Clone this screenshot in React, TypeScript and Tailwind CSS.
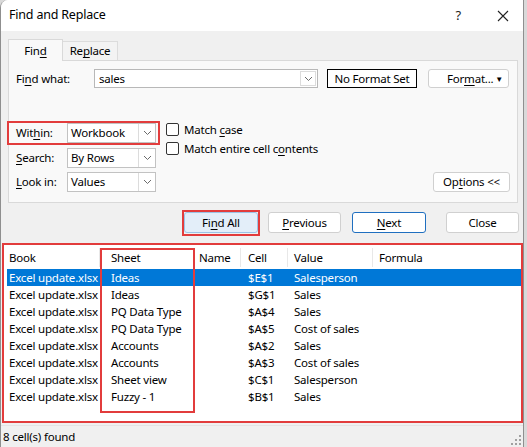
import React from "react";

const U = ({ c }: { c: string }) => (
  <span className="underline underline-offset-[2px] decoration-[1px]">{c}</span>
);

const Chevron = () => (
  <svg width="9" height="6" viewBox="0 0 9 6">
    <path d="M1 1 L4.5 4.5 L8 1" fill="none" stroke="#6b6b6b" strokeWidth="1" />
  </svg>
);

function Select({ value }: { value: string }) {
  return (
    <div className="w-[89px] h-[20px] bg-white border border-[#c2c2c2] flex items-center">
      <span className="pl-[3px] flex-1">{value}</span>
      <div className="w-[17px] h-full border-l border-[#dcdcdc] flex items-center justify-center">
        <Chevron />
      </div>
    </div>
  );
}

function CheckItem({ children }: { children: React.ReactNode }) {
  return (
    <div className="flex items-center h-[13px]">
      <div className="w-[13px] h-[13px] border border-[#333] rounded-[2px] bg-white" />
      <span className="ml-[5px] leading-none">{children}</span>
    </div>
  );
}

const rows = [
  ["Excel update.xlsx", "Ideas", "", "$E$1", "Salesperson"],
  ["Excel update.xlsx", "Ideas", "", "$G$1", "Sales"],
  ["Excel update.xlsx", "PQ Data Type", "", "$A$4", "Sales"],
  ["Excel update.xlsx", "PQ Data Type", "", "$A$5", "Cost of sales"],
  ["Excel update.xlsx", "Accounts", "", "$A$2", "Sales"],
  ["Excel update.xlsx", "Accounts", "", "$A$3", "Cost of sales"],
  ["Excel update.xlsx", "Sheet view", "", "$C$1", "Salesperson"],
  ["Excel update.xlsx", "Fuzzy - 1", "", "$B$1", "Sales"],
];

export default function App() {
  return (
    <div className="w-[527px] h-[447px] bg-[#d9d9d9] overflow-hidden font-['Noto_Sans','Liberation_Sans',sans-serif] text-[11.5px] tracking-[-0.2px] text-black">
      <div className="w-[524px] h-[447px] bg-[#f0f0f0] border-r border-l border-[#8f8f8f] rounded-tl-[8px] flex flex-col overflow-hidden">
        {/* Title bar */}
        <div className="h-[31px] bg-white flex items-center pl-[8px] shrink-0">
          <span className="text-[12.5px]">Find and Replace</span>
          <span className="ml-auto text-[13px] text-[#222]">?</span>
          <span className="ml-[36px] mr-[14px] text-[#222]">
            <svg width="12" height="12" viewBox="0 0 12 12">
              <path d="M1 1 L11 11 M11 1 L1 11" stroke="#222" strokeWidth="1.1" />
            </svg>
          </span>
        </div>

        {/* Tabs */}
        <div className="h-[29px] flex items-end pl-[7px] shrink-0">
          <div className="relative top-[1px] z-10 w-[55px] h-[22px] bg-[#f9f9f9] border border-b-0 border-[#d9d9d9] flex items-center justify-center">
            Fin<U c="d" />
          </div>
          <div className="w-[55px] h-[19px] bg-[#f3f3f3] border border-l-0 border-b-0 border-[#dcdcdc] flex items-center justify-center">
            Re<U c="p" />lace
          </div>
        </div>

        {/* Panel */}
        <div className="ml-[7px] w-[510px] h-[143px] bg-[#f9f9f9] border border-[#d9d9d9] pt-[8px] pl-[7px] pr-[7px] shrink-0">
          <div className="flex items-center h-[19px]">
            <span className="w-[78px]">
              Fi<U c="n" />d what:
            </span>
            <div className="w-[224px] h-[19px] bg-white border border-[#b8b8b8] flex items-center">
              <span className="pl-[4px] flex-1">sales</span>
              <div className="w-[16px] h-[15px] mr-[1px] border border-[#dcdcdc] flex items-center justify-center">
                <Chevron />
              </div>
            </div>
            <div className="ml-[9px] w-[90px] h-[19px] border border-black bg-white flex items-center justify-center">
              No Format Set
            </div>
            <div className="ml-[11px] w-[81px] h-[19px] rounded-[3px] border border-[#d0d0d0] bg-white flex items-center">
              <span className="ml-[18px]">
                For<U c="m" />at...
              </span>
              <span className="ml-auto mr-[5px] text-[8px]">▼</span>
            </div>
          </div>

          <div className="flex mt-[35px]">
            <div className="flex flex-col">
              <div className="relative flex items-center h-[20px]">
                <span className="w-[51px]">
                  Wit<U c="h" />in:
                </span>
                <Select value="Workbook" />
                <div className="absolute -left-[9px] -right-[4px] -top-[2px] -bottom-[2px] border-2 border-[#e23c3c]" />
              </div>
              <div className="flex items-center h-[20px] mt-[5px]">
                <span className="w-[51px]">
                  <U c="S" />earch:
                </span>
                <Select value="By Rows" />
              </div>
              <div className="flex items-center h-[20px] mt-[4px]">
                <span className="w-[51px]">
                  <U c="L" />ook in:
                </span>
                <Select value="Values" />
              </div>
            </div>
            <div className="ml-[10px] flex flex-col gap-[6px]">
              <CheckItem>
                Match <U c="c" />ase
              </CheckItem>
              <CheckItem>
                Match entire cell c<U c="o" />ntents
              </CheckItem>
            </div>
            <div className="flex-1 flex justify-end items-end">
              <div className="w-[77px] h-[20px] rounded-[3px] border border-[#d0d0d0] bg-white flex items-center justify-center">
                Op<U c="t" />ions &lt;&lt;
              </div>
            </div>
          </div>
        </div>

        {/* Buttons */}
        <div className="flex h-[21px] mt-[9px] pl-[183px] shrink-0">
          <div className="relative w-[74px] h-[21px] rounded-[3px] border border-[#9cc3e6] bg-[#e3eef9] flex items-center justify-center">
            Fi<U c="n" />d All
            <div className="absolute -left-[3px] -right-[3px] -top-[3px] -bottom-[4px] border-2 border-[#e23c3c]" />
          </div>
          <div className="ml-[10px] w-[73px] h-[21px] rounded-[3px] border border-[#d0d0d0] bg-white flex items-center justify-center">
            <U c="P" />revious
          </div>
          <div className="ml-[11px] w-[74px] h-[21px] rounded-[3px] border border-[#1f6fc0] bg-white flex items-center justify-center">
            <U c="N" />ext
          </div>
          <div className="ml-[20px] w-[73px] h-[21px] rounded-[3px] border border-[#d0d0d0] bg-white flex items-center justify-center">
            Close
          </div>
        </div>

        {/* Results */}
        <div className="relative ml-[1px] mt-[10px] w-[521px] h-[180px] border-2 border-[#e23c3c] bg-white pl-[3px] pt-[1px] shrink-0">
          <div className="relative grid grid-cols-[102px_88px_49px_46px_85px_1fr] h-[23px] items-center">
            <span className="pl-[2px]">Book</span>
            <span className="pl-[2px]">Sheet</span>
            <span className="pl-[2px]">Name</span>
            <span className="pl-[2px]">Cell</span>
            <span className="pl-[2px]">Value</span>
            <span className="pl-[2px]">Formula</span>
            <div className="absolute left-[92px] top-[2px] bottom-[2px] w-px bg-[#e8e8e8]" />
            <div className="absolute left-[187px] top-[2px] bottom-[2px] w-px bg-[#e8e8e8]" />
            <div className="absolute left-[233px] top-[2px] bottom-[2px] w-px bg-[#e8e8e8]" />
            <div className="absolute left-[280px] top-[2px] bottom-[2px] w-px bg-[#e8e8e8]" />
            <div className="absolute left-[365px] top-[2px] bottom-[2px] w-px bg-[#e8e8e8]" />
          </div>
          {rows.map((r, i) => (
            <div
              key={i}
              className={
                i === 0
                  ? "grid grid-cols-[102px_88px_49px_46px_85px_1fr] h-[17px] items-center bg-[#0078d7] text-white"
                  : "grid grid-cols-[102px_88px_49px_46px_85px_1fr] h-[17px] items-center"
              }
            >
              {r.map((c, j) => (
                <span key={j} className="pl-[2px] whitespace-nowrap leading-none">
                  {c}
                </span>
              ))}
              <span />
            </div>
          ))}
          <div className="absolute left-[96px] top-[3px] w-[95px] h-[165px] border-2 border-[#e23c3c]" />
        </div>

        {/* Status bar */}
        <div className="relative flex-1 flex items-center pl-[2px] mt-[2px] border-t border-[#e4e4e4]">
          8 cell(s) found
          <svg className="absolute right-[2px] bottom-[2px]" width="10" height="10" viewBox="0 0 10 10">
            <g fill="#a0a0a0">
              <rect x="8" y="0" width="2" height="2" />
              <rect x="4" y="4" width="2" height="2" />
              <rect x="8" y="4" width="2" height="2" />
              <rect x="0" y="8" width="2" height="2" />
              <rect x="4" y="8" width="2" height="2" />
              <rect x="8" y="8" width="2" height="2" />
            </g>
          </svg>
        </div>
      </div>
    </div>
  );
}
